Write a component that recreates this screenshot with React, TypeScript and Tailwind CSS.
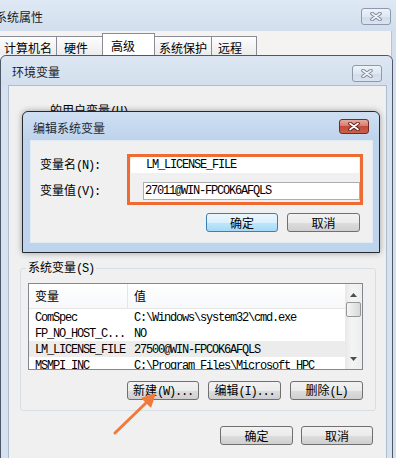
import type { ReactNode } from "react";

const mono = "font-['Liberation_Mono',monospace] text-[12px] tracking-[-1.2px]";

function M({ children }: { children: ReactNode }) {
  return <span className={mono}>{children}</span>;
}

function XGlyph({ outline, fill }: { outline: string; fill: string }) {
  return (
    <svg width="12" height="9" viewBox="0 0 12 9">
      <path d="M2 1.5L10 7.5M10 1.5L2 7.5" stroke={outline} strokeWidth="3.6" strokeLinecap="round" />
      <path d="M2 1.5L10 7.5M10 1.5L2 7.5" stroke={fill} strokeWidth="1.7" strokeLinecap="round" />
    </svg>
  );
}

function CloseButton({ active = false }: { active?: boolean }) {
  if (active) {
    return (
      <div className="flex h-[15px] w-[30px] items-center justify-center rounded-[3px] border border-[#6d2d25] bg-[linear-gradient(180deg,#e9a99c_0%,#d77d6d_45%,#c44c3a_50%,#cc5e48_100%)]">
        <XGlyph outline="#5a1f18" fill="#ffffff" />
      </div>
    );
  }
  return (
    <div className="flex h-[17px] w-[30px] items-center justify-center rounded-[3px] border border-[#8d9aab] bg-[linear-gradient(180deg,#eef3f9_0%,#dfe7f1_50%,#d2dce9_51%,#dae3ee_100%)]">
      <XGlyph outline="#7c8899" fill="#eef2f7" />
    </div>
  );
}

function Button({ children, primary = false, size }: { children: ReactNode; primary?: boolean; size: string }) {
  const look = primary
    ? "border-[#3c7fb1] bg-[linear-gradient(180deg,#eaf6fd_0%,#d9f0fc_50%,#bee6fd_51%,#a7d9f5_100%)]"
    : "border-[#707070] bg-[linear-gradient(180deg,#f2f2f2_0%,#ebebeb_50%,#dddddd_51%,#cfcfcf_100%)]";
  return (
    <div className={`flex items-center justify-center rounded-[3px] border ${look} ${size}`}>
      <span className="leading-none">{children}</span>
    </div>
  );
}

function Tab({ label, size, selected = false }: { label: string; size: string; selected?: boolean }) {
  return (
    <div
      className={
        selected
          ? `z-10 -mx-[1px] h-[22px] border border-b-0 border-[#898c95] bg-white pt-[6px] ${size}`
          : `h-[19px] border border-b-0 border-l-0 border-[#898c95] bg-[linear-gradient(180deg,#fdfdfd_0%,#ececec_100%)] pt-[5px] ${size}`
      }
    >
      {label}
    </div>
  );
}

const rows = [
  { name: "ComSpec", value: "C:\\Windows\\system32\\cmd.exe" },
  { name: "FP_NO_HOST_C...", value: "NO" },
  { name: "LM_LICENSE_FILE", value: "27500@WIN-FPCOK6AFQLS", selected: true },
  { name: "MSMPI_INC", value: "C:\\Program Files\\Microsoft HPC" },
];

function VariableList() {
  return (
    <div className="flex h-[87px] w-[335px] overflow-hidden border border-[#828790] bg-white">
      <div className="flex flex-1 flex-col">
        <div className="flex h-[25px] shrink-0 border-b border-[#e5e5e5] bg-[linear-gradient(180deg,#ffffff_0%,#f7f8fa_100%)]">
          <div className="flex w-[99px] items-center border-r border-[#e5e5e5] pl-[6px]">变量</div>
          <div className="flex items-center pl-[6px]">值</div>
        </div>
        {rows.map((r) => (
          <div
            key={r.name}
            className={`flex h-[16px] shrink-0 items-center ${r.selected ? "bg-[#ececec]" : ""}`}
          >
            <div className="w-[99px] pl-[6px]">
              <M>{r.name}</M>
            </div>
            <div className="whitespace-nowrap pl-[6px]">
              <M>{r.value}</M>
            </div>
          </div>
        ))}
      </div>
      <div className="flex w-[17px] flex-col bg-[linear-gradient(90deg,#e8e8e8_0%,#f4f4f4_40%,#eeeeee_100%)]">
        <div className="flex h-[17px] items-center justify-center pt-[4px]">
          <svg width="7" height="4" viewBox="0 0 7 4"><path d="M0 4L3.5 0L7 4Z" fill="#4d4d4d" /></svg>
        </div>
        <div className="mx-[1px] mt-[1px] h-[15px] rounded-[2px] border border-[#979797] bg-[linear-gradient(90deg,#f5f5f5_0%,#e6e6e6_50%,#d8d8d8_100%)]" />
        <div className="flex-1" />
        <div className="flex h-[17px] items-center justify-center pb-[3px]">
          <svg width="7" height="4" viewBox="0 0 7 4"><path d="M0 0L3.5 4L7 0Z" fill="#4d4d4d" /></svg>
        </div>
      </div>
    </div>
  );
}

export default function App() {
  return (
    <div className="relative h-[458px] w-[396px] overflow-hidden bg-[#d3dfee] font-['Noto_Sans_CJK_SC',sans-serif] text-[12px] leading-none text-black">
      {/* 系统属性 */}
      <div className="flex h-[31px] items-start justify-between bg-[linear-gradient(180deg,#dfe9f5_0%,#d2deed_100%)] pr-[5px]">
        <span className="ml-[-5px] mt-[11px] text-[#1b1b1b]">系统属性</span>
        <div className="mt-[8px]">
          <CloseButton />
        </div>
      </div>
      <div className="mr-[4px] h-[427px] border-r border-[#b7c3d2] bg-[#f4f3f2]">
        <div className="flex h-[24px] items-end">
          <Tab label="计算机名" size="w-[57px] pl-[4px] border-l" />
          <Tab label="硬件" size="w-[46px] pl-[7px]" />
          <Tab label="高级" size="w-[53px] pl-[8px]" selected />
          <Tab label="系统保护" size="w-[58px] pl-[5px]" />
          <Tab label="远程" size="w-[45px] pl-[6px]" />
        </div>
      </div>

      {/* 环境变量 */}
      <div className="absolute left-0 top-[55px] flex h-[410px] w-[393px] flex-col rounded-t-[6px] border border-[#4d5868] bg-[#d6e2ef]">
        <div className="flex h-[29px] shrink-0 items-start justify-between rounded-t-[6px] bg-[linear-gradient(180deg,#dde7f3_0%,#d3dfed_100%)] pl-[11px] pr-[10px]">
          <span className="mt-[10px] text-[#222]">环境变量</span>
          <div className="mt-[9px]">
            <CloseButton />
          </div>
        </div>
        <div className="ml-[7px] mr-[5px] flex flex-1 flex-col border border-[#aebdce] bg-[#f0f0f0]">
          <div className="ml-[41px] mt-[18px]">
            的用户变量<M>(U)</M>
          </div>
          <fieldset className="ml-[11px] mt-[143px] w-[356px] rounded-[3px] border border-[#d5dfe5] pb-[10px]">
            <legend className="ml-[5px] px-[2px]">
              系统变量<M>(S)</M>
            </legend>
            <div className="ml-[7px] mt-[8px]">
              <VariableList />
            </div>
            <div className="mt-[11px] flex justify-end gap-[9px] pr-[12px]">
              <Button size="h-[19px] w-[72px]">
                新建<M>(W)...</M>
              </Button>
              <Button size="h-[19px] w-[73px]">
                编辑<M>(I)...</M>
              </Button>
              <Button size="h-[19px] w-[73px]">
                删除<M>(L)</M>
              </Button>
            </div>
          </fieldset>
          <div className="mt-[15px] flex justify-end gap-[8px] pr-[13px]">
            <Button size="h-[19px] w-[73px]">确定</Button>
            <Button size="h-[19px] w-[72px]">取消</Button>
          </div>
        </div>
      </div>

      {/* 编辑系统变量 */}
      <div className="absolute left-[22px] top-[111px] flex h-[142px] w-[358px] flex-col rounded-t-[6px] border border-[#262a30] bg-[#bed3ec] shadow-[0_0_6px_rgba(0,0,0,0.35)]">
        <div className="flex h-[28px] shrink-0 items-start justify-between rounded-t-[6px] bg-[linear-gradient(180deg,#cfdff2_0%,#bed3ec_100%)] pl-[10px] pr-[10px]">
          <span className="mt-[10px] text-[#1e2a38]">编辑系统变量</span>
          <div className="mt-[7px]">
            <CloseButton active />
          </div>
        </div>
        <div className="ml-[7px] mr-[6px] flex h-[103px] flex-col border border-[#e2eaf4] bg-[#f0f0f0]">
          <div className="mt-[15px] flex h-[17px] items-center">
            <div className="w-[100px] pl-[9px]">
              变量名<M>(N):</M>
            </div>
            <div className="flex h-[17px] w-[228px] items-center bg-white pl-[15px]">
              <M>LM_LICENSE_FILE</M>
            </div>
          </div>
          <div className="mt-[9px] flex h-[18px] items-center">
            <div className="w-[112px] pl-[9px]">
              变量值<M>(V):</M>
            </div>
            <div className="flex h-[18px] w-[217px] items-center border border-[#abadb3] bg-white pl-[1px]">
              <M>27011@WIN-FPCOK6AFQLS</M>
            </div>
          </div>
          <div className="mt-[13px] flex justify-end gap-[9px] pr-[12px]">
            <Button primary size="h-[19px] w-[72px]">确定</Button>
            <Button size="h-[19px] w-[73px]">取消</Button>
          </div>
        </div>
      </div>

      {/* 标注 */}
      <div className="absolute left-[127px] top-[154px] h-[51px] w-[236px] border-[3px] border-[#ee6b34]" />
      <svg className="absolute left-[108px] top-[388px]" width="54" height="52" viewBox="0 0 54 52">
        <path d="M7 45L39 14" stroke="#f07a3c" strokeWidth="3" strokeLinecap="round" />
        <path d="M48 5L43 20L33 10Z" fill="#f07a3c" />
      </svg>
    </div>
  );
}
